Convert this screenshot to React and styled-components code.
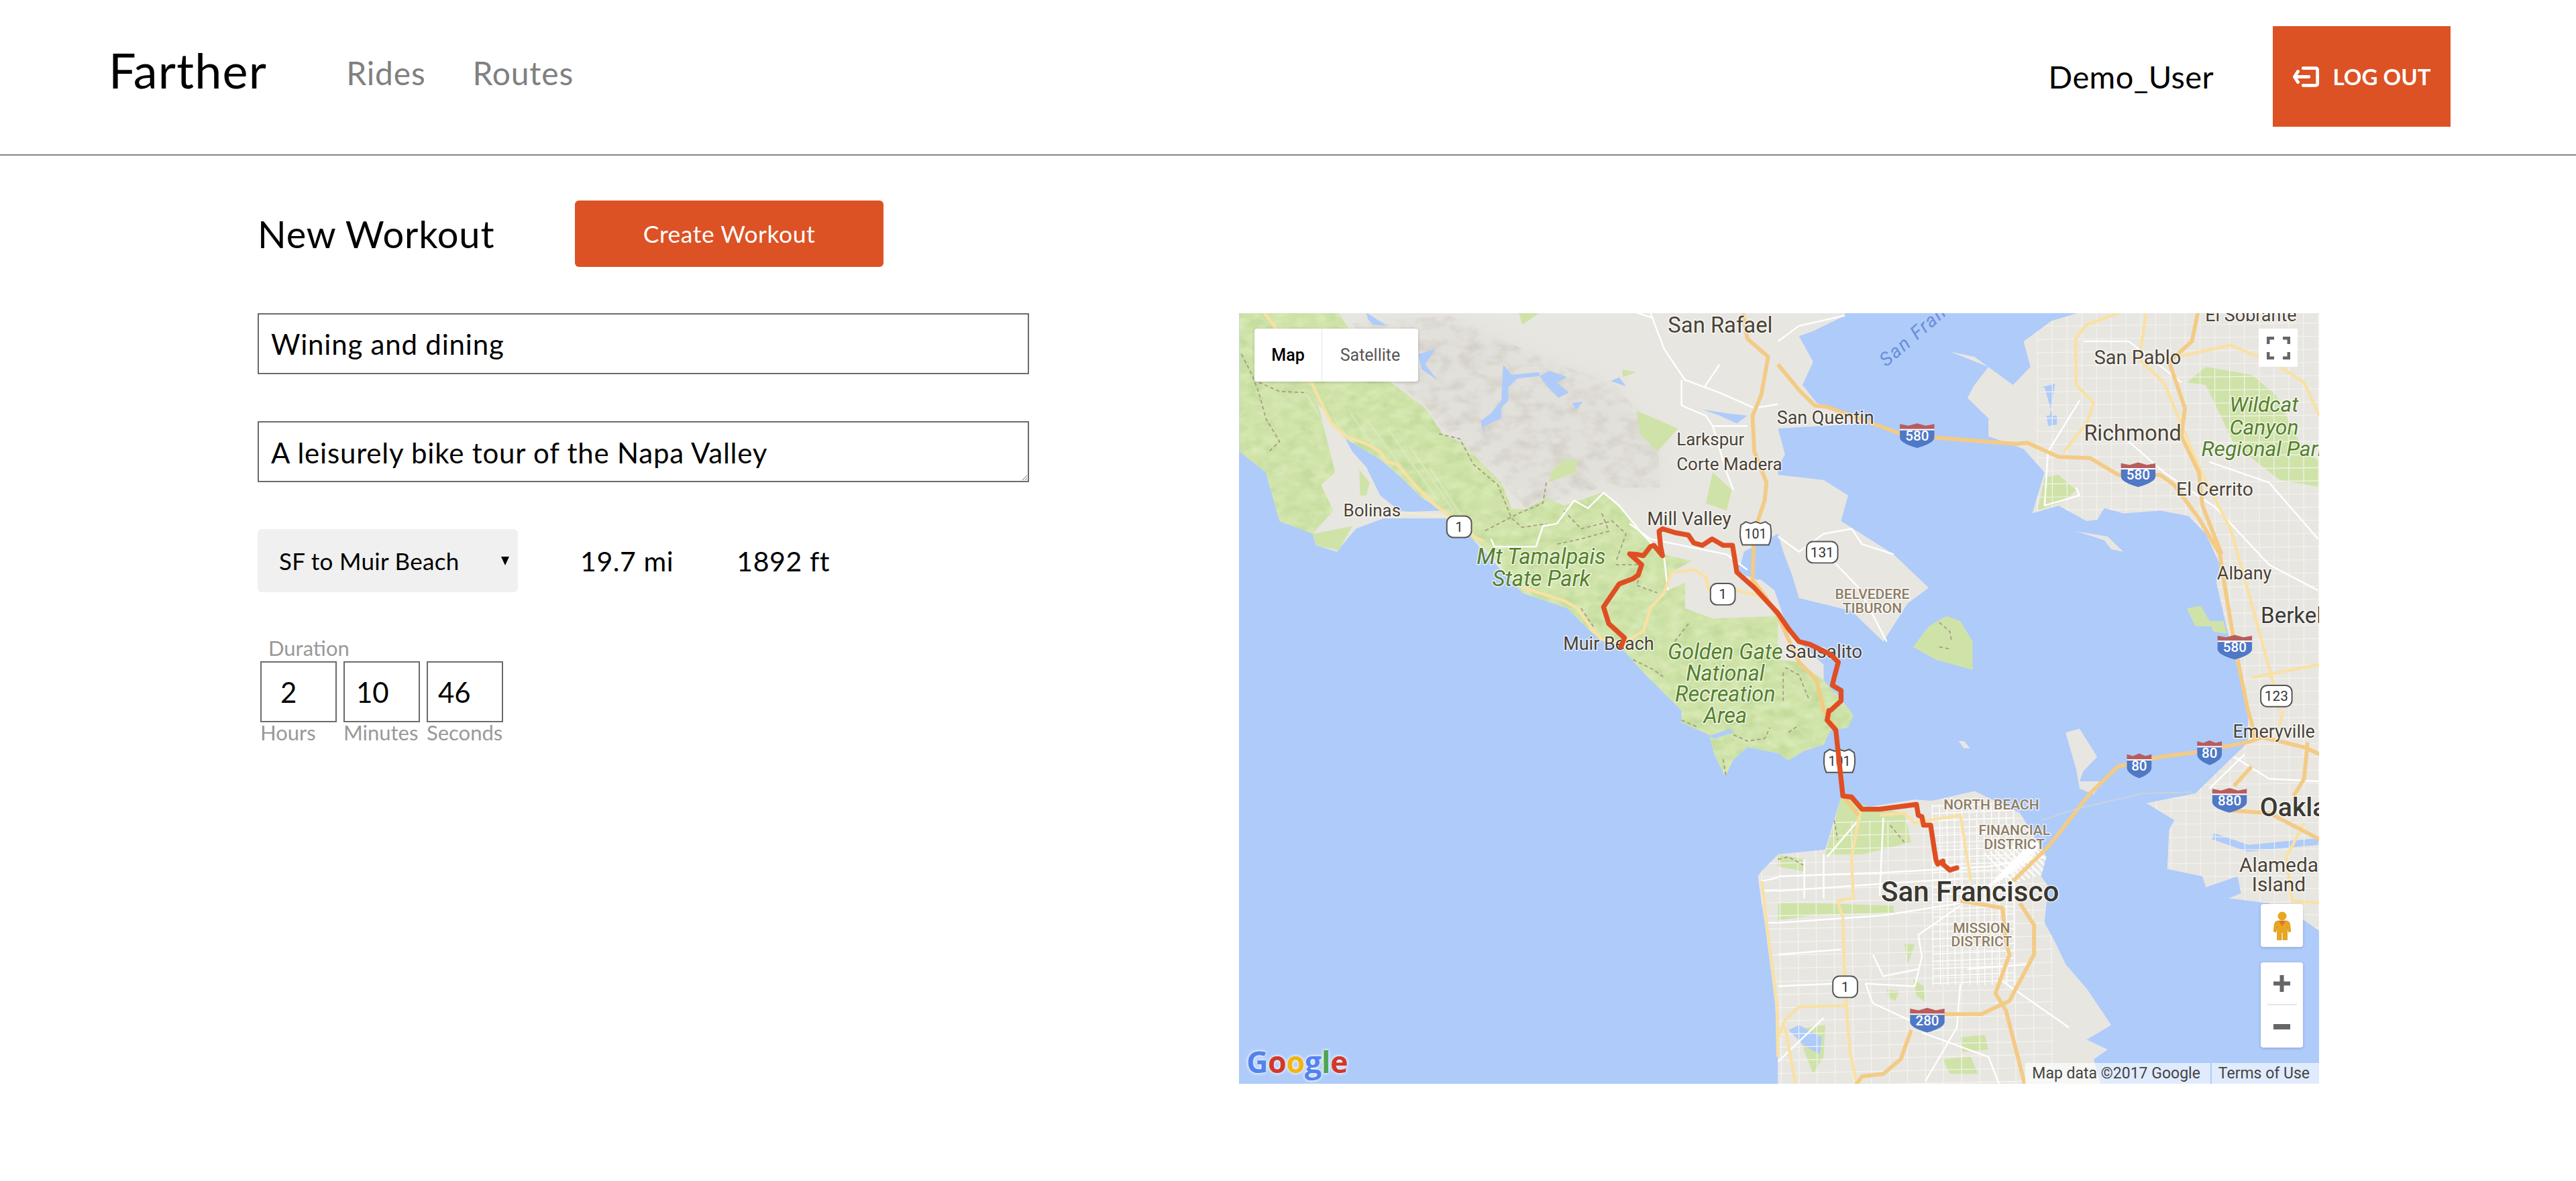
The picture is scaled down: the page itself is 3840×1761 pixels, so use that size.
import React from 'react';
import styled, { createGlobalStyle } from 'styled-components';

const ORANGE = '#DC5225';
const SANS = '"Lato", "Noto Sans", sans-serif';

const Global = createGlobalStyle`
  html, body { margin: 0; padding: 0; background: #fff; }
  body { font-family: ${SANS}; color: #000; }
  * { box-sizing: border-box; }
`;

const Page = styled.div`width: 3840px; min-height: 1761px; background: #fff;`;
const Header = styled.header`
  height: 232px; display: flex; align-items: center; justify-content: space-between;
  padding: 0 187px 2px 162px; border-bottom: 2px solid #858585;
`;
const Brand = styled.div`display: flex; align-items: center; padding-bottom: 10px;`;
const Logo = styled.div`font-size: 72px; line-height: 1; letter-spacing: 1.2px; padding-bottom: 10px;`;
const Nav = styled.nav`display: flex; gap: 70px; margin-left: 118px;`;
const NavLink = styled.a`font-size: 48px; line-height: 1; color: #808080; letter-spacing: 0.8px;`;
const UserArea = styled.div`display: flex; align-items: center; gap: 88px;`;
const UserName = styled.div`font-size: 47px; line-height: 1; letter-spacing: 0.4px;`;
const LogoutButton = styled.button`
  width: 265px; height: 150px; border: 0; background: ${ORANGE}; color: #fff;
  display: flex; align-items: center; justify-content: center; gap: 21px; padding: 0;
  font: 700 33px ${SANS};
`;
const Main = styled.main`padding: 67px 0 0 384px;`;
const TitleRow = styled.div`display: flex; align-items: center; height: 99px;`;
const Title = styled.h1`margin: 0; font-size: 56px; font-weight: 400; line-height: 1; letter-spacing: 0.8px; width: 473px;`;
const CreateButton = styled.button`
  width: 460px; height: 99px; border: 0; border-radius: 6px; background: ${ORANGE}; color: #fff;
  font: 400 35.5px ${SANS}; letter-spacing: 0.5px;
`;
const Body = styled.div`display: grid; grid-template-columns: 1150px 1610px; column-gap: 313px; margin-top: 69px;`;
const Form = styled.div`display: flex; flex-direction: column; gap: 70px;`;
const fieldCss = `
  display: block; width: 1150px; height: 91px; border: 2px solid #6b6b6b; border-radius: 0; background: #fff;
  font: 400 42px/1 ${SANS}; color: #000; padding: 0 18px; outline: none; letter-spacing: 0.8px;
`;
const NameInput = styled.input`${fieldCss}`;
const DescArea = styled.textarea`${fieldCss} padding-top: 21px; line-height: 48px; resize: vertical;`;
const RouteRow = styled.div`display: flex; align-items: center;`;
const SelectWrap = styled.div`
  position: relative; width: 388px; height: 94px;
  &::after {
    content: ''; position: absolute; right: 13px; top: 41px; width: 0; height: 0;
    border-left: 6px solid transparent; border-right: 6px solid transparent; border-top: 13px solid #000;
  }
`;
const RouteSelect = styled.select`
  appearance: none; width: 100%; height: 100%; border: 0; border-radius: 6px; background: #f0f0f0;
  padding: 0 32px; font: 400 35px ${SANS}; color: #000; letter-spacing: 0.3px;
`;
const Stat = styled.div`font-size: 41px; line-height: 1; letter-spacing: 0.6px; margin-left: ${p => p.$gap}px;`;
const DurationBlock = styled.div`display: flex; flex-direction: column; margin: -3px 0 0 4px;`;
const DurationLabel = styled.div`font-size: 31px; line-height: 32px; padding: 0 0 4px 12px; color: #999;`;
const DurationFields = styled.div`display: flex; gap: 10px;`;
const DurationField = styled.label`display: flex; flex-direction: column; width: 114px;`;
const DurationInput = styled.input`
  width: 114px; height: 91px; border: 2px solid #6b6b6b; border-radius: 0; outline: none; background: #fff;
  font: 400 42px ${SANS}; color: #000; padding: 0 0 0 ${p => p.$pad}px;
`;
const UnitLabel = styled.span`font-size: 31px; line-height: 30px; color: #999; white-space: nowrap;`;

const MapFrame = styled.div`position: relative; width: 1610px; height: 1149px; overflow: hidden; background: #aecbfa;`;
const MapSvg = styled.svg`display: block; width: 1610px; height: 1149px;`;
const MapType = styled.div`
  position: absolute; left: 23px; top: 23px; width: 244px; height: 79px; background: #fff; border-radius: 4px;
  display: flex; box-shadow: 0 1px 4px rgba(0,0,0,.2); font-family: Roboto, sans-serif; font-size: 25px;
`;
const MapTypeTab = styled.div`
  display: flex; align-items: center; justify-content: center; height: 100%;
  width: ${p => p.$w}px; color: ${p => p.$active ? '#000' : '#565656'}; font-weight: ${p => p.$active ? 500 : 400};
  border-right: ${p => p.$active ? '1px solid #e6e6e6' : '0'};
`;
const CtrlBox = styled.div`
  position: absolute; background: #fff; border-radius: 4px; box-shadow: 0 1px 4px rgba(0,0,0,.2);
  display: flex; flex-direction: column; align-items: center; justify-content: center;
`;
const FullscreenBox = styled(CtrlBox)`right: 32px; top: 23px; width: 58px; height: 57px; border-radius: 0; box-shadow: none;`;
const PegmanBox = styled(CtrlBox)`right: 24px; top: 881px; width: 63px; height: 64px;`;
const ZoomBox = styled(CtrlBox)`right: 24px; top: 968px; width: 63px; height: 127px; justify-content: flex-start; padding-top: 19px;`;
const ZoomRule = styled.div`width: 44px; height: 2px; background: #e6e6e6; margin: 18px 0 28px;`;
const Attribution = styled.div`
  position: absolute; right: 0; bottom: 0; height: 31px; display: flex; align-items: center;
  font: 400 23px Roboto, sans-serif; color: #444;
`;
const AttrCell = styled.span`
  height: 100%; display: flex; align-items: center; padding: 0 ${p => p.$pad}px 0 10px;
  background: rgba(255,255,255,.62); margin-left: 2px;
`;
const GoogleLogo = styled.div`
  position: absolute; left: 11px; bottom: 8px; font: 700 45px/50px "Open Sans", sans-serif; letter-spacing: -0.5px;
  text-shadow: 0 0 2px rgba(255,255,255,.8), 0 0 4px rgba(255,255,255,.8), 0 0 6px rgba(255,255,255,.6);
`;
const GoogleLetter = styled.span`color: ${p => p.$c};`;

/* reference crop coordinate systems -> map units */
const Z = {
  a: (x, y) => [751.3 + x / 4.741, 187.8 + y / 6.4],
  b: (x, y) => [1082.1 + x / 4.683, 187.8 + y / 6.4],
  c: (x, y) => [751.3 + x / 4.741, 432.8 + y / 6.736],
  d: (x, y) => [1082.1 + x / 4.683, 432.8 + y / 6.736],
};
const pts = (...segs) => {
  const out = [];
  segs.forEach(([z, ...n]) => {
    for (let i = 0; i < n.length; i += 2) {
      const [x, y] = Z[z](n[i], n[i + 1]);
      out.push(`${x.toFixed(1)},${y.toFixed(1)}`);
    }
  });
  return out.join(' ');
};

const WATER = '#aecbfa', LAND = '#e8e6e1', GREEN = '#cfe3a8', ORG = '#f3cb85', YEL = '#f9e1a3';

const LANDS = [
  pts(['a', 14, 0], ['b', 195, 0, 190, 30, 100, 90, 60, 110, 100, 210, 70, 300, 110, 370, 270, 450, 120, 460, 0, 470, 20, 570, 0, 620, 0, 650, 130, 670, 200, 730, 180, 830, 330, 960, 430, 1090, 370, 1150, 300, 1300, 210, 1180, 60, 1130, 40, 1040, 15, 950, 0, 880],
    ['a', 1470, 950, 1455, 1030, 1500, 1040, 1530, 1070], ['b', -10, 1100, 20, 1220, 60, 1300, 130, 1390, 130, 1470, 165, 1500, 205, 1568],
    ['d', 215, 20, 200, 70, 150, 80, 130, 140, 75, 165, 30, 205, 0, 175], ['c', 1480, 150, 1440, 200, 1415, 270, 1385, 180, 1370, 100, 1290, 50],
    ['a', 1290, 1568, 1180, 1420, 1120, 1330, 1050, 1290, 960, 1170, 830, 1110, 680, 890, 610, 820, 430, 820, 350, 860, 295, 950, 235, 925, 225, 880, 130, 830, 90, 640, 14, 560]),
  pts(['b', 870, 0, 860, 18, 780, 50, 700, 130, 720, 230, 670, 300, 560, 190, 490, 170, 600, 230, 560, 300, 540, 350, 600, 430, 600, 500, 700, 550, 760, 640, 725, 800, 800, 770, 880, 830, 910, 825, 930, 780, 985, 800, 1090, 790, 1170, 810, 1220, 880, 1260, 1000, 1250, 1070, 1280, 1250, 1310, 1400, 1340, 1568],
    ['d', 1340, 60, 1340, 130, 1190, 340, 1050, 380, 1130, 450, 1115, 490, 1110, 650, 1210, 680, 1220, 725, 1310, 680, 1320, 750, 1285, 770, 1400, 790, 1480, 840, 1560, 920, 1560, 0],
    ['b', 1560, 1568, 1560, 0]),
  pts(['c', 1510, 680, 1530, 870, 1560, 1200, 1568, 1400, 1568, 1560], ['d', 930, 1560, 920, 1530, 900, 1430, 940, 1390, 880, 1350, 950, 1290, 880, 1140, 820, 1040, 790, 950, 760, 870, 770, 720, 750, 680, 765, 600, 690, 420, 560, 330, 440, 370, 390, 365, 260, 395, 180, 355, 135, 570, 0, 590], ['c', 1520, 660]),
  pts(['d', 820, 90, 860, 75, 910, 190, 870, 250, 860, 290, 925, 290, 900, 345, 860, 320, 850, 240, 830, 140]),
  pts(['b', 850, 870, 940, 890, 985, 950, 950, 940, 930, 905]),
  pts(['d', 515, 125, 530, 125, 548, 155, 530, 155]),
];
const GREENS = [
  pts(['a', 14, 0, 85, 0, 230, 310, 240, 370, 290, 640, 250, 690, 285, 790, 225, 880, 130, 830, 90, 640, 14, 560]),
  pts(['a', 85, 0, 290, 0, 330, 80, 430, 270, 550, 390, 600, 490, 660, 530, 770, 680, 800, 780, 840, 785, 900, 740, 950, 770, 1060, 720, 1110, 770, 1170, 870, 1240, 960, 1320, 985, 1260, 1030, 1250, 1100, 1300, 1070, 1300, 1170, 1380, 1210, 1568, 1200],
    ['b', 0, 1370, 60, 1380, 130, 1450, 205, 1568], ['d', 215, 20, 200, 70, 150, 80, 130, 140, 75, 165, 30, 205, 0, 175],
    ['c', 1480, 150, 1440, 200, 1415, 270, 1385, 180, 1370, 100, 1290, 50], ['a', 1290, 1568, 1180, 1420, 1120, 1330, 1050, 1290, 960, 1170, 830, 1110, 740, 960, 680, 890, 610, 790, 540, 740, 480, 660, 420, 590, 320, 510, 240, 370, 230, 310]),
  pts(['a', 225, 880, 340, 850, 300, 945, 235, 925]),
  pts(['a', 360, 630, 390, 680, 380, 730, 362, 730]),
  pts(['b', 385, 1320, 430, 1240, 480, 1200, 520, 1220, 555, 1300, 555, 1410, 450, 1370]),
  pts(['d', 180, 355, 260, 395, 360, 420, 380, 540, 240, 590, 135, 590]),
  pts(['d', 0, 590, 75, 610, 75, 660, 0, 640]),
  pts(['d', 0, 790, 100, 790, 330, 800, 330, 830, 100, 840, 0, 860]),
  pts(['a', 1160, 400, 1280, 470, 1220, 560, 1170, 490]), pts(['a', 950, 590, 990, 590, 985, 640, 905, 680, 920, 630]),
  pts(['a', 1380, 640, 1435, 710, 1420, 790, 1360, 760]), pts(['a', 820, 20, 880, 20, 830, 65]), pts(['a', 1120, 240, 1160, 250, 1120, 270]),
  pts(['b', 1165, 290, 1220, 230, 1350, 260, 1420, 340, 1500, 560, 1560, 610, 1560, 700, 1430, 670, 1300, 530, 1220, 300]),
  pts(['b', 760, 660, 800, 650, 850, 710, 820, 750, 740, 790]),
  pts(['b', 1165, 1170, 1205, 1160, 1240, 1240, 1190, 1240]), pts(['b', 1230, 1220, 1270, 1220, 1280, 1270, 1240, 1260]),
  pts(['d', 520, 1340, 590, 1330, 600, 1390, 525, 1400]), pts(['d', 470, 1430, 550, 1420, 570, 1490, 490, 1490]),
  pts(['d', 360, 955, 390, 960, 370, 1040]), pts(['d', 310, 1145, 345, 1150, 335, 1190, 315, 1180]),
  pts(['d', 30, 1310, 135, 1290, 130, 1420, 100, 1490, 60, 1340]), pts(['d', 385, 1100, 415, 1130, 420, 1195, 395, 1170]),
];
const HILLS = [
  pts(['a', 340, 60, 620, 30, 900, 200, 1100, 300, 1220, 500, 1230, 700, 1060, 700, 840, 780, 760, 660, 600, 470, 550, 380, 430, 250]),
];
const PONDS = [
  pts(['a', 380, 18, 440, 70, 400, 65, 385, 45]),
  pts(['a', 775, 220, 800, 260, 880, 250, 880, 220, 880, 265, 815, 275, 790, 310, 790, 360, 770, 390, 770, 430, 720, 460, 720, 490, 710, 440, 740, 410, 770, 360]),
  pts(['a', 880, 265, 910, 245, 960, 270, 930, 290, 965, 330, 935, 350, 905, 310]),
  pts(['a', 975, 370, 1005, 365, 985, 400]), pts(['a', 530, 180, 580, 160, 550, 220, 585, 280, 540, 240]),
  pts(['a', 1085, 285, 1110, 270, 1130, 305]), pts(['a', 1350, 395, 1420, 410, 1480, 420, 1450, 450, 1400, 420]),
  pts(['a', 1450, 1000, 1510, 1000, 1568, 1030, 1510, 1060, 1470, 1040]),
  pts(['b', 750, 310, 790, 295, 770, 460, 790, 455, 760, 310]), pts(['b', 765, 420, 795, 420, 795, 455, 770, 455]),
  pts(['d', 30, 1310, 60, 1290, 125, 1340, 120, 1410, 80, 1380]),
];
const ROADS_ORG = [
  pts(['a', 1465, 0, 1480, 120, 1540, 190, 1520, 340, 1495, 420, 1500, 560, 1535, 680, 1530, 750, 1500, 870, 1495, 1060, 1530, 1120, 1568, 1200], ['b', 60, 1380, 110, 1450, 130, 1568], ['d', 130, 0, 165, 70, 180, 250, 185, 350, 230, 430]),
  pts(['b', 0, 220, 60, 320, 105, 380, 140, 385, 260, 445, 350, 490, 450, 505, 680, 530, 710, 525, 800, 580, 890, 585, 970, 650, 1090, 650, 1130, 690, 1200, 820, 1260, 960, 1265, 1010, 1300, 1300, 1340, 1568], ['d', 1350, 50, 1360, 120]),
  pts(['b', 1200, 0, 1180, 130, 1115, 210, 1160, 390, 1150, 500, 1200, 640, 1210, 770, 1265, 960]),
  pts(['d', 670, 700, 770, 560, 890, 340, 970, 230, 1090, 190, 1200, 170, 1340, 130, 1380, 110, 1500, 150, 1560, 190]),
  pts(['d', 1300, 310, 1350, 230]), pts(['d', 1290, 410, 1400, 420, 1560, 540]),
  pts(['d', 1510, 130, 1500, 280, 1470, 350]),
  pts(['d', 520, 780, 640, 810, 650, 950, 660, 1000, 620, 1160, 650, 1230, 705, 1540]),
  pts(['d', 690, 790, 730, 880, 730, 1000, 660, 1190, 580, 1245, 480, 1245, 430, 1235]),
  pts(['d', 380, 1310, 350, 1430, 300, 1490, 240, 1500, 220, 1540]),
];
const ROADS_YEL = [
  pts(['a', 85, 18, 120, 80, 225, 300, 250, 370, 280, 450, 320, 500, 380, 530, 420, 560, 440, 600, 470, 610, 520, 690, 580, 770, 620, 810, 690, 890, 720, 910]),
  pts(['a', 830, 1090, 880, 1110, 950, 1140, 990, 1170, 1030, 1250, 1060, 1290, 1120, 1305, 1180, 1260, 1200, 1170, 1240, 1110, 1260, 1030, 1330, 1020, 1360, 1050, 1370, 1100, 1420, 1110, 1450, 1100, 1510, 1120, 1568, 1180]),
  pts(['b', 1100, 290, 1210, 650, 1290, 860, 1340, 1100, 1410, 1450, 1430, 1568]), pts(['b', 975, 18, 880, 65, 848, 120, 850, 300, 900, 370, 880, 450, 815, 560]),
  pts(['b', 1050, 18, 1030, 200, 1100, 290]), pts(['b', 1140, 190, 1290, 145, 1370, 190]), pts(['b', 1430, 230, 1500, 290, 1543, 420]),
  pts(['b', 1350, 1440, 1560, 1385]), pts(['d', 1500, 460, 1450, 600, 1465, 780, 1560, 790]), pts(['d', 1440, 0, 1430, 60]),
  pts(['d', 235, 410, 210, 600, 215, 770, 170, 780, 185, 850, 190, 1100, 195, 1210, 205, 1400, 225, 1530]),
  pts(['d', 290, 430, 360, 420, 390, 460, 520, 430, 550, 700]),
  pts(['d', 0, 1340, 20, 1270, 60, 1215, 200, 1210]), pts(['d', 20, 1300, 50, 1530]),
  pts(['c', 1522, 700, 1535, 870, 1565, 1200, 1568, 1420]),
];
const ROADS_WHITE = [
  pts(['a', 740, 900, 750, 930, 870, 930, 890, 850, 930, 840, 980, 750, 1020, 780, 1065, 720, 1110, 770, 1170, 870, 1240, 970, 1250, 1100]),
  pts(['a', 1200, 18, 1240, 160, 1300, 280, 1400, 330, 1500, 390, 1568, 375]), pts(['a', 1160, 18, 1210, 40]), pts(['a', 1290, 280, 1290, 380, 1360, 420, 1380, 460, 1480, 460]),
  pts(['a', 1400, 220, 1355, 310]), pts(['a', 1380, 460, 1420, 640, 1440, 710]), pts(['a', 1140, 840, 1200, 900, 1420, 960, 1480, 1020]),
  pts(['b', 0, 130, 60, 70, 190, 30]), pts(['b', 0, 890, 60, 950, 130, 880, 210, 860, 240, 920, 330, 960]), pts(['b', 160, 990, 230, 1090, 310, 1300]),
  pts(['b', 870, 130, 1000, 130, 1150, 290]), pts(['b', 860, 360, 770, 560, 760, 770, 860, 730, 850, 700]),
  pts(['b', 1000, 520, 1100, 640, 1250, 780, 1400, 1000, 1540, 1100]), pts(['b', 1230, 600, 1400, 680, 1540, 900]),
  pts(['d', 0, 680, 300, 665, 600, 640, 760, 600]), pts(['d', 0, 740, 300, 710, 520, 690]), pts(['d', 0, 870, 300, 840, 520, 790]),
  pts(['d', 130, 590, 130, 770]), pts(['d', 75, 610, 75, 770]), pts(['d', 300, 440, 290, 760]), pts(['d', 235, 440, 140, 600]),
  pts(['d', 520, 800, 400, 920, 410, 1010, 390, 1130, 250, 1120, 270, 1200, 420, 1300]), pts(['d', 400, 1060, 300, 1090, 270, 1000]),
  pts(['d', 0, 1000, 180, 980]), pts(['d', 0, 1130, 160, 1120]), pts(['d', 540, 1060, 720, 1040]), pts(['d', 520, 1120, 510, 1300, 420, 1520]),
  pts(['d', 640, 1110, 830, 1300]), pts(['d', 410, 1320, 600, 1420, 630, 1530]),
  pts(['d', 1300, 190, 1400, 280, 1543, 290]), pts(['d', 1230, 320, 1330, 180]), pts(['d', 0, 1440, 130, 1260]),
  pts(['c', 1522, 700, 1568, 685]), pts(['c', 1540, 870, 1568, 870]), pts(['c', 1530, 740, 1568, 738]),
];
const TRAILS = [
  pts(['a', 20, 180, 50, 260, 70, 330, 90, 430, 130, 520, 95, 565]), pts(['a', 70, 290, 130, 325, 210, 330]),
  pts(['a', 590, 490, 650, 510, 690, 610, 760, 690, 800, 820, 830, 855, 900, 840]), pts(['a', 900, 680, 890, 760, 820, 800, 720, 870]),
  pts(['a', 950, 790, 1000, 860, 1090, 830, 1130, 880, 1100, 990]), pts(['a', 1060, 800, 1080, 870, 1000, 900, 930, 920]),
  pts(['a', 1100, 1000, 1180, 1000, 1160, 1080, 1220, 1110]), pts(['a', 1000, 1170, 1040, 1250]), pts(['a', 1310, 1230, 1270, 1300]),
  pts(['a', 1150, 1370, 1210, 1410, 1240, 1440]), pts(['b', 20, 1400, 60, 1430, 90, 1530]), pts(['b', 15, 1420, 15, 1530]),
  pts(['c', 1290, 40, 1340, 70]), pts(['c', 1440, 100, 1480, 125, 1530, 115, 1545, 70]), pts(['c', 1410, 200, 1418, 268]),
  pts(['d', 30, 90, 60, 60]), pts(['d', 0, 610, 30, 600, 80, 640]), pts(['d', 160, 450, 170, 530]), pts(['d', 320, 470, 360, 540]),
  pts(['b', 460, 1225, 490, 1260, 495, 1300]), pts(['b', 460, 1320, 495, 1330]),
];
const ROUTE = pts(
  ['d', 510, 645, 490, 655, 470, 630, 470, 618, 455, 630, 450, 610, 435, 470, 415, 470, 410, 435, 400, 430, 395, 385, 290, 405, 240, 405, 225, 380, 210, 355, 185, 350, 165, 80, 140, 40, 145, 0],
  ['b', 150, 1568, 180, 1530, 180, 1490, 155, 1470, 160, 1440, 172, 1380, 150, 1350, 90, 1310, 60, 1300, 30, 1250, 0, 1190],
  ['a', 1500, 1090, 1450, 1030, 1437, 925, 1410, 925, 1378, 900, 1350, 925, 1325, 915, 1310, 885, 1270, 875, 1235, 860, 1225, 870, 1230, 930, 1235, 965, 1210, 925, 1200, 930, 1180, 965, 1160, 960, 1140, 958, 1175, 1000, 1165, 1040, 1150, 1055, 1110, 1075, 1065, 1165, 1080, 1230, 1125, 1285, 1115, 1320],
);

const grid = (x0, x1, y0, y1, dx, dy, tilt) => {
  let d = '';
  for (let y = y0; y <= y1; y += dy) d += `M${x0} ${y + tilt}L${x1} ${y - tilt}`;
  for (let x = x0; x <= x1; x += dx) d += `M${x} ${y0}L${x + tilt / 2} ${y1}`;
  return d;
};
const hatch = () => {
  let d = '';
  for (let i = 0; i < 9; i++) {
    d += `M${1208 + i * 3.2} ${520 - i * 1}L${1226 + i * 3.2} ${538 - i}`;
    d += `M${1208 + i * 3.2} ${542 - i * 2}L${1236 + i * 1.2} ${514 - i * 0.8}`;
  }
  return d;
};

const LABELS = [
  ['San Rafael', 1047, 203, 13.4], ['Larkspur', 1041, 271.5, 10.6], ['Corte Madera', 1052.5, 286.5, 10.6], ['San Quentin', 1111, 258.5, 11],
  ['Bolinas', 835, 314.5, 10.6], ['Mill Valley', 1028, 320, 11.4], ['Muir Beach', 979, 396, 11], ['Sausalito', 1110, 401, 11.4],
  ['San Pablo', 1301, 222, 11.8], ['Richmond', 1298, 268.5, 13.2], ['El Sobrante', 1370, 196, 11], ['El Cerrito', 1348, 302, 11.6],
  ['Albany', 1366, 353, 11], ['Emeryville', 1384, 449.5, 11], ['Alameda', 1387, 531, 12.2], ['Island', 1387, 543, 12.2],
];

const Shield = ({ x, y, label, w = 15 }) => (
  <g transform={`translate(${x} ${y})`}>
    <rect x={-w / 2} y={-6.5} width={w} height={13} rx={4} fill="#fff" stroke="#555" strokeWidth={0.8} />
    <text x={0} y={3} textAnchor="middle" fontFamily="Roboto, sans-serif" fontSize={8.5} fill="#333">{label}</text>
  </g>
);
const UsShield = ({ x, y, label }) => (
  <g transform={`translate(${x} ${y})`}>
    <path d="M-9 -5 L-6 -7 L-3 -6 L0 -7 L3 -6 L6 -7 L9 -5 C10 1 9 5 8 7 L-8 7 C-9 5 -10 1 -9 -5 Z" fill="#fff" stroke="#555" strokeWidth={0.8} />
    <text x={0} y={3.2} textAnchor="middle" fontFamily="Roboto, sans-serif" fontSize={8} fill="#333">{label}</text>
  </g>
);
const Interstate = ({ x, y, label, wide }) => {
  const w = wide ? 10.5 : 7.5;
  return (
    <g transform={`translate(${x} ${y})`}>
      <path d={`M${-w} -4 L${-w} -7 L${-w / 2} -6 L0 -7.5 L${w / 2} -6 L${w} -7 L${w} -4 Z`} fill="#b95c5c" />
      <path d={`M${-w} -4 L${w} -4 L${w} -3.2 L${-w} -3.2 Z`} fill="#fff" />
      <path d={`M${-w} -3.2 L${w} -3.2 L${w} 1 C${w} 4 ${w / 2} 6 0 7.5 C${-w / 2} 6 ${-w} 4 ${-w} 1 Z`} fill="#4f78c6" />
      <text x={0} y={3} textAnchor="middle" fontFamily="Roboto, sans-serif" fontWeight={500} fontSize={8.4} fill="#fff">{label}</text>
    </g>
  );
};

const MapText = styled.text`
  font-family: Roboto, sans-serif; paint-order: stroke; stroke: rgba(255,255,255,.7); stroke-width: 1.3px; stroke-linejoin: round;
  text-anchor: ${p => p.$anchor || 'middle'};
`;

const TheMap = () => (
  <MapSvg viewBox="754 191 657.5 469" preserveAspectRatio="none">
    <defs>
      <clipPath id="sf"><polygon points={LANDS[2]} /></clipPath>
      <clipPath id="eb"><polygon points={LANDS[1]} /></clipPath>
      <clipPath id="marin"><polygon points={LANDS[0]} /></clipPath>
      <clipPath id="hills"><polygon points={HILLS[0]} /></clipPath>
      <clipPath id="parks"><polygon points={GREENS[0]} /><polygon points={GREENS[1]} /></clipPath>
      <filter id="blurHill" x="754" y="191" width="658" height="469" filterUnits="userSpaceOnUse"><feGaussianBlur stdDeviation="6" /></filter>
      <filter id="terrain" x="754" y="191" width="658" height="469" filterUnits="userSpaceOnUse" colorInterpolationFilters="sRGB">
        <feTurbulence type="fractalNoise" baseFrequency=".09 .13" numOctaves="3" seed="7" />
        <feColorMatrix values="0 0 0 0 .74  0 0 0 0 .72  0 0 0 0 .68  1 0 0 0 -.42" />
      </filter>
      <filter id="greenDark" x="754" y="191" width="658" height="469" filterUnits="userSpaceOnUse" colorInterpolationFilters="sRGB">
        <feTurbulence type="fractalNoise" baseFrequency=".1 .16" numOctaves="3" seed="3" />
        <feColorMatrix values="0 0 0 0 .68  0 0 0 0 .8  0 0 0 0 .53  1 0 0 0 -.42" />
      </filter>
      <filter id="greenLight" x="754" y="191" width="658" height="469" filterUnits="userSpaceOnUse" colorInterpolationFilters="sRGB">
        <feTurbulence type="fractalNoise" baseFrequency=".12 .18" numOctaves="2" seed="11" />
        <feColorMatrix values="0 0 0 0 .9  0 0 0 0 .95  0 0 0 0 .78  1.2 0 0 0 -.5" />
      </filter>
    </defs>
    <rect x="754" y="191" width="658" height="469" fill={WATER} />
    {LANDS.map((p, i) => <polygon key={i} points={p} fill={LAND} />)}
    <polygon points={HILLS[0]} fill="#e2e0da" filter="url(#blurHill)" />
    <g clipPath="url(#marin)"><g clipPath="url(#hills)">
      <rect x="754" y="191" width="658" height="469" filter="url(#terrain)" />
    </g></g>
    {GREENS.map((p, i) => <polygon key={i} points={p} fill={GREEN} />)}
    <g clipPath="url(#parks)">
      <rect x="754" y="191" width="658" height="469" filter="url(#greenDark)" />
      <rect x="754" y="191" width="658" height="469" filter="url(#greenLight)" />
      <path d="M812 255L840 296M822 252L852 296M832 256L864 300M845 262L875 305M858 272L885 312M870 285L892 318M795 240L812 270M880 300L905 340" stroke="#dcebbf" strokeWidth="1.4" opacity=".55" />
    </g>
    <polygon points={pts(['a', 320, 510, 420, 590, 480, 660, 540, 740, 600, 790, 480, 795, 420, 730, 380, 620, 340, 560])} fill={WATER} />
    <polygon points={pts(['c', 1370, 105, 1430, 75, 1440, 90, 1385, 115])} fill={WATER} />
    {PONDS.map((p, i) => <polygon key={i} points={p} fill={WATER} />)}
    <polyline points={pts(['d', 1240, 515, 1340, 565, 1440, 550, 1560, 535])} fill="none" stroke={WATER} strokeWidth="4" />
    <polyline points={pts(['a', 480, 795, 610, 812])} fill="none" stroke="#f0ecd0" strokeWidth="1.2" />
    <g clipPath="url(#sf)">
      <path d={grid(1072, 1250, 500, 660, 11, 8, 2)} stroke="#f5f4f1" strokeWidth=".5" fill="none" />
      <path d={grid(1176, 1226, 490, 600, 4.5, 4.5, 1)} stroke="#fff" strokeWidth=".55" fill="none" />
      <path d={hatch()} stroke="#fff" strokeWidth=".9" fill="none" />
    </g>
    <g clipPath="url(#eb)">
      <path d={grid(1240, 1412, 190, 660, 9, 8, 1)} stroke="#f3f2ee" strokeWidth=".5" fill="none" />
    </g>
    {TRAILS.map((p, i) => <polyline key={i} points={p} fill="none" stroke="#a89c85" strokeWidth=".75" strokeDasharray="2.2 1.6" />)}
    {ROADS_WHITE.map((p, i) => <polyline key={i} points={p} fill="none" stroke="#fff" strokeWidth="1" strokeLinejoin="round" />)}
    {ROADS_YEL.map((p, i) => <polyline key={i} points={p} fill="none" stroke={YEL} strokeWidth="1.8" strokeLinejoin="round" />)}
    {ROADS_ORG.map((p, i) => <polyline key={i} points={p} fill="none" stroke={ORG} strokeWidth="2.4" strokeLinejoin="round" />)}
    <polyline points={pts(['d', 750, 450, 860, 400, 1040, 340, 1180, 335])} fill="none" stroke="#cdd4da" strokeWidth=".7" />

    {LABELS.map(([t, x, y, s]) => <MapText key={t + x} x={x} y={y} fontSize={s} fill="#4b4336">{t}</MapText>)}
    <MapText x={1376} y={379.5} fontSize={13.5} fill="#3c3a35" $anchor="start">Berkeley</MapText>
    <MapText x={1375.5} y={497} fontSize={16} fontWeight={500} fill="#3c3a35" $anchor="start">Oakland</MapText>
    <MapText x={1199} y={549} fontSize={17.2} fontWeight={500} fill="#3a372f">San Francisco</MapText>
    {[['Mt Tamalpais', 938, 343.5], ['State Park', 938, 357]].map(([t, x, y]) => <MapText key={t} x={x} y={y} fontSize={13.4} fontStyle="italic" fill="#55802c">{t}</MapText>)}
    {[['Golden Gate', 1050, 401.5], ['National', 1050, 414.5], ['Recreation', 1050, 427.5], ['Area', 1050, 440.5]].map(([t, x, y]) => <MapText key={t} x={x} y={y} fontSize={13.2} fontStyle="italic" fill="#55802c">{t}</MapText>)}
    {[['Wildcat', 1378, 251], ['Canyon', 1378, 265], ['Regional Park', 1378.5, 278]].map(([t, x, y]) => <MapText key={t} x={x} y={y} fontSize={13} fontStyle="italic" fill="#55802c">{t}</MapText>)}
    {[['BELVEDERE', 1139.5, 365], ['TIBURON', 1139.5, 373.5], ['NORTH BEACH', 1212, 493], ['FINANCIAL', 1226, 508.5], ['DISTRICT', 1226, 517], ['MISSION', 1206, 568], ['DISTRICT', 1206, 576.5]].map(([t, x, y]) => (
      <MapText key={t + y} x={x} y={y} fontSize={8.6} fontWeight={500} fill="#8e7c63">{t}</MapText>
    ))}
    <text transform="translate(1148 224) rotate(-41)" fontFamily="Roboto, sans-serif" fontStyle="italic" fontSize="11.5" fill="#6a8fd6" letterSpacing=".8">San Francisco Bay</text>

    <Shield x={888} y={321} label="1" />
    <Shield x={1048.5} y={362} label="1" />
    <Shield x={1123} y={601} label="1" />
    <Shield x={1109} y={336.5} label="131" w={19} />
    <Shield x={1385.5} y={424} label="123" w={19} />
    <UsShield x={1068.5} y={325} label="101" />
    <UsShield x={1119.5} y={463.5} label="101" />
    <Interstate x={1166.8} y={265.5} label="580" wide />
    <Interstate x={1301.4} y={289.3} label="580" wide />
    <Interstate x={1360.2} y={394.3} label="580" wide />
    <Interstate x={1173} y={621.3} label="280" wide />
    <Interstate x={1302} y={466.5} label="80" />
    <Interstate x={1344.8} y={458.5} label="80" />
    <Interstate x={1357} y={487.5} label="880" wide />

    <polyline points={ROUTE} fill="none" stroke="#df4f23" strokeWidth="3" strokeLinejoin="round" strokeLinecap="round" />
  </MapSvg>
);

const LogoutIcon = () => (
  <svg width="39" height="31" viewBox="0 0 41 32" fill="none" stroke="#fff" strokeWidth="5" strokeLinecap="round" strokeLinejoin="round">
    <path d="M16 2.5H36a2.5 2.5 0 0 1 2.5 2.5V27a2.5 2.5 0 0 1-2.5 2.5H16" />
    <path d="M8 7.5L2.5 16L8 24.5" />
    <path d="M4 16H25" />
  </svg>
);
const FullscreenIcon = () => (
  <svg width="35" height="34" viewBox="0 0 35 34" fill="none" stroke="#666" strokeWidth="4.5">
    <path d="M2.2 11V2.2H11M24 2.2H32.8V11M32.8 23V31.8H24M11 31.8H2.2V23" />
  </svg>
);
const PegmanIcon = () => (
  <svg width="26" height="43" viewBox="0 0 26 43">
    <circle cx="13" cy="7" r="6.5" fill="#e9a61e" />
    <path d="M6 14H20Q24 15 24.5 19L26 30L22.5 31L20.5 23V42.5H14V31H12V42.5H5.5V23L3.5 31L0 30L1.5 19Q2 15 6 14Z" fill="#e9a61e" stroke="#c98a14" strokeWidth=".6" />
    <path d="M8 14L13 22L18 14Z" fill="#d9722a" />
  </svg>
);
const PlusIcon = () => (
  <svg width="25" height="25" viewBox="0 0 25 25"><path d="M9.5 0h6v9.5H25v6h-9.5V25h-6v-9.5H0v-6h9.5z" fill="#666" /></svg>
);
const MinusIcon = () => (
  <svg width="25" height="8" viewBox="0 0 25 8"><rect width="25" height="8" fill="#666" /></svg>
);

export default function App() {
  return (
    <Page>
      <Global />
      <Header>
        <Brand>
          <Logo>Farther</Logo>
          <Nav>
            <NavLink>Rides</NavLink>
            <NavLink>Routes</NavLink>
          </Nav>
        </Brand>
        <UserArea>
          <UserName>Demo_User</UserName>
          <LogoutButton><LogoutIcon />LOG OUT</LogoutButton>
        </UserArea>
      </Header>
      <Main>
        <TitleRow>
          <Title>New Workout</Title>
          <CreateButton>Create Workout</CreateButton>
        </TitleRow>
        <Body>
          <Form>
            <NameInput readOnly value="Wining and dining" />
            <DescArea readOnly value="A leisurely bike tour of the Napa Valley" />
            <RouteRow>
              <SelectWrap>
                <RouteSelect defaultValue="sf"><option value="sf">SF to Muir Beach</option></RouteSelect>
              </SelectWrap>
              <Stat $gap={93}>19.7 mi</Stat>
              <Stat $gap={94}>1892 ft</Stat>
            </RouteRow>
            <DurationBlock>
              <DurationLabel>Duration</DurationLabel>
              <DurationFields>
                <DurationField><DurationInput readOnly value="2" $pad={28} /><UnitLabel>Hours</UnitLabel></DurationField>
                <DurationField><DurationInput readOnly value="10" $pad={17} /><UnitLabel>Minutes</UnitLabel></DurationField>
                <DurationField><DurationInput readOnly value="46" $pad={15} /><UnitLabel>Seconds</UnitLabel></DurationField>
              </DurationFields>
            </DurationBlock>
          </Form>
          <MapFrame>
            <TheMap />
            <MapType>
              <MapTypeTab $active $w={101}>Map</MapTypeTab>
              <MapTypeTab $w={143}>Satellite</MapTypeTab>
            </MapType>
            <FullscreenBox><FullscreenIcon /></FullscreenBox>
            <PegmanBox><PegmanIcon /></PegmanBox>
            <ZoomBox><PlusIcon /><ZoomRule /><MinusIcon /></ZoomBox>
            <GoogleLogo>
              <GoogleLetter $c="#5383ec">G</GoogleLetter><GoogleLetter $c="#d0392b">o</GoogleLetter><GoogleLetter $c="#f2b50f">o</GoogleLetter><GoogleLetter $c="#5383ec">g</GoogleLetter><GoogleLetter $c="#4ba651">l</GoogleLetter><GoogleLetter $c="#d0392b">e</GoogleLetter>
            </GoogleLogo>
            <Attribution>
              <AttrCell $pad={15}>Map data ©2017 Google</AttrCell>
              <AttrCell $pad={14}>Terms of Use</AttrCell>
            </Attribution>
          </MapFrame>
        </Body>
      </Main>
    </Page>
  );
}
